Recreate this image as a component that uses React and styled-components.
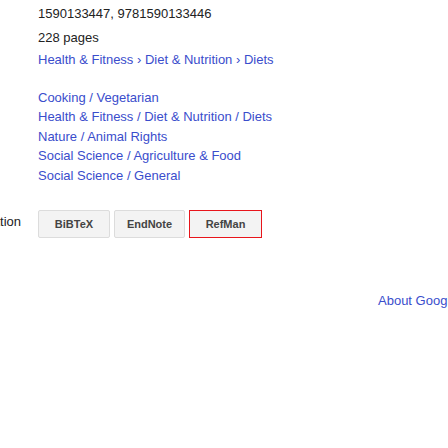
import React from 'react';
import styled, { createGlobalStyle } from 'styled-components';

const GlobalStyle = createGlobalStyle`
  html, body {
    margin: 0;
    padding: 0;
    background: #fff;
    overflow: hidden;
  }
  body {
    font-family: "Liberation Sans", Arial, sans-serif;
    font-size: 13px;
    color: #222;
  }
`;

const Page = styled.div`
  width: 448px;
  height: 448px;
  overflow: hidden;
`;

const Row = styled.div`
  display: flex;
  align-items: flex-start;
  margin-top: ${(p) => p.top || 0}px;
`;

const Label = styled.div`
  width: 38px;
  flex: none;
  display: flex;
  justify-content: flex-end;
  padding-right: 17px;
  margin-top: ${(p) => p.offset || 0}px;
  box-sizing: border-box;
  white-space: nowrap;
  color: #222;
  line-height: 16px;
`;

const Cell = styled.div`
  flex: 1;
  min-width: 0;
`;

const Line = styled.div`
  line-height: 16px;
  color: ${(p) => (p.link ? '#3a4dcc' : '#222')};
  margin-top: ${(p) => p.top || 0}px;
  white-space: nowrap;
`;

const Categories = styled.div`
  margin-top: 20px;
`;

const Category = styled.a`
  display: block;
  line-height: 19.4px;
  color: #3a4dcc;
  text-decoration: none;
`;

const Buttons = styled.div`
  display: flex;
  gap: 4px;
`;

const Button = styled.button`
  width: ${(p) => p.w}px;
  height: 28px;
  box-sizing: border-box;
  border: 1px solid ${(p) => (p.active ? '#e8151b' : '#dcdcdc')};
  border-radius: ${(p) => (p.active ? 0 : 2)}px;
  background: #f3f3f3;
  font-family: "Liberation Sans", Arial, sans-serif;
  font-size: 11px;
  font-weight: bold;
  color: #444;
  padding: 0;
  cursor: pointer;
`;

const Footer = styled.div`
  margin-top: 55px;
  padding-left: 378px;
  white-space: nowrap;
  line-height: 16px;
`;

const FooterLink = styled.a`
  color: #3a4dcc;
  text-decoration: none;
`;

const categories = [
  'Cooking / Vegetarian',
  'Health & Fitness / Diet & Nutrition / Diets',
  'Nature / Animal Rights',
  'Social Science / Agriculture & Food',
  'Social Science / General',
];

export default function App() {
  return (
    <Page>
      <GlobalStyle />
      <Row top={6}>
        <Label />
        <Cell>
          <Line>1590133447, 9781590133446</Line>
          <Line top={8}>228 pages</Line>
          <Line link top={6}>
            Health &amp; Fitness › Diet &amp; Nutrition › Diets
          </Line>
          <Categories>
            {categories.map((c) => (
              <Category key={c} href="#">{c}</Category>
            ))}
          </Categories>
        </Cell>
      </Row>
      <Row top={25}>
        <Label offset={4}>Export Citation</Label>
        <Cell>
          <Buttons>
            <Button w={72}>BiBTeX</Button>
            <Button w={71}>EndNote</Button>
            <Button w={73} active>RefMan</Button>
          </Buttons>
        </Cell>
      </Row>
      <Footer>
        <FooterLink href="#">About Google Books</FooterLink>
      </Footer>
    </Page>
  );
}
